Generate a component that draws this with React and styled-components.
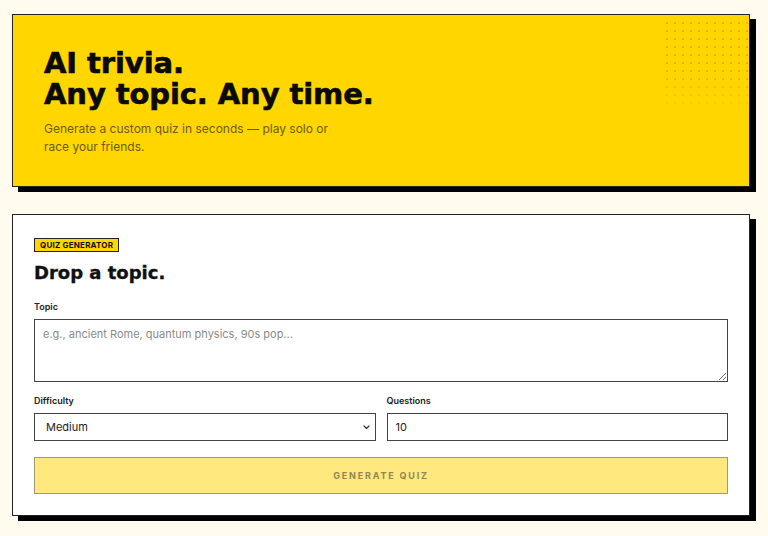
import React from "react";
import styled, { createGlobalStyle } from "styled-components";

const Global = createGlobalStyle`
  * { box-sizing: border-box; }
  html, body { margin: 0; padding: 0; background: #fffbef; }
  body { font-family: Inter, "Liberation Sans", sans-serif; color: #111; }
`;

const Page = styled.div`
  padding: 14px 18px 20px 12px;
  display: flex;
  flex-direction: column;
  gap: 27px;
`;

const Hero = styled.section`
  position: relative;
  overflow: hidden;
  background: #ffd600;
  border: 1px solid #222;
  box-shadow: 6px 5px 0 #000;
  padding: 33px 31px 30px;
  &::after {
    content: "";
    position: absolute;
    top: 2px;
    right: 0;
    width: 88px;
    height: 96px;
    background-image: radial-gradient(circle, rgba(150, 110, 0, 0.3) 0.8px, transparent 1.2px);
    background-size: 8px 8px;
    background-position: 2px 2px;
    -webkit-mask-image: linear-gradient(to bottom, #000 55%, transparent);
    mask-image: linear-gradient(to bottom, #000 55%, transparent);
  }
`;

const HeroTitle = styled.h1`
  margin: 0;
  font-family: "DejaVu Sans", "Liberation Sans", sans-serif;
  font-weight: 700;
  font-size: 29px;
  line-height: 31px;
  letter-spacing: -0.1px;
  color: #0a0a0a;
  -webkit-text-stroke: 0.6px #0a0a0a;
`;

const HeroText = styled.p`
  margin: 10px 0 0;
  max-width: 300px;
  font-size: 12px;
  line-height: 18px;
  color: #6e5b00;
`;

const Card = styled.section`
  background: #fff;
  border: 1px solid #222;
  box-shadow: 6px 5px 0 #000;
  padding: 23px 21px 21px;
  display: flex;
  flex-direction: column;
`;

const Badge = styled.span`
  align-self: flex-start;
  background: #ffd600;
  border: 1px solid #222;
  font-size: 8px;
  font-weight: 700;
  letter-spacing: 0.2px;
  line-height: 12px;
  padding: 0 5px;
  text-transform: uppercase;
`;

const CardTitle = styled.h2`
  margin: 9px 0 0;
  font-family: "DejaVu Sans", "Liberation Sans", sans-serif;
  font-weight: 700;
  font-size: 18px;
  line-height: 24px;
  -webkit-text-stroke: 0.35px #0a0a0a;
`;

const Field = styled.label`
  display: flex;
  flex-direction: column;
  gap: 7px;
  margin-top: ${(p) => p.$mt || 0}px;
  min-width: 0;
`;

const Label = styled.span`
  font-size: 9px;
  font-weight: 600;
  line-height: 11px;
  color: #222;
`;

const TextArea = styled.textarea`
  height: 63px;
  resize: vertical;
  border: 1px solid #444;
  border-radius: 0;
  padding: 7px 8px;
  font-family: Inter, "Liberation Sans", sans-serif;
  font-size: 11px;
  color: #222;
  &::placeholder { color: #8a8a8a; }
`;

const Row = styled.div`
  display: grid;
  grid-template-columns: 1fr 1fr;
  gap: 11px;
  margin-top: 13px;
`;

const SelectWrap = styled.div`
  position: relative;
  display: flex;
  flex-direction: column;
`;

const Select = styled.select`
  appearance: none;
  -webkit-appearance: none;
  height: 28px;
  border: 1px solid #444;
  border-radius: 0;
  background: #fff;
  padding: 0 20px 0 11px;
  font-family: Inter, "Liberation Sans", sans-serif;
  font-size: 11px;
  color: #222;
`;

const Chevron = styled.svg`
  position: absolute;
  right: 6px;
  top: 50%;
  width: 7px;
  height: 5px;
  margin-top: -2px;
  pointer-events: none;
`;

const Input = styled.input`
  height: 28px;
  border: 1px solid #444;
  border-radius: 0;
  padding: 0 8px;
  font-family: Inter, "Liberation Sans", sans-serif;
  font-size: 11px;
  color: #222;
`;

const Button = styled.button`
  margin-top: 16px;
  height: 37px;
  background: #ffe97f;
  border: 1px solid #a09a70;
  border-radius: 0;
  font-family: Inter, "Liberation Sans", sans-serif;
  font-size: 9px;
  font-weight: 700;
  letter-spacing: 1.8px;
  color: #8f8650;
  text-transform: uppercase;
  cursor: not-allowed;
`;

export default function App() {
  return (
    <>
      <Global />
      <Page>
        <Hero>
          <HeroTitle>
            AI trivia.
            <br />
            Any topic. Any time.
          </HeroTitle>
          <HeroText>
            Generate a custom quiz in seconds — play solo or race your friends.
          </HeroText>
        </Hero>
        <Card>
          <Badge>Quiz Generator</Badge>
          <CardTitle>Drop a topic.</CardTitle>
          <Field $mt={16}>
            <Label>Topic</Label>
            <TextArea placeholder="e.g., ancient Rome, quantum physics, 90s pop..." />
          </Field>
          <Row>
            <Field>
              <Label>Difficulty</Label>
              <SelectWrap>
                <Select defaultValue="Medium">
                  <option>Easy</option>
                  <option>Medium</option>
                  <option>Hard</option>
                </Select>
                <Chevron viewBox="0 0 7 5" fill="none">
                  <path d="M1 1l2.5 2.5L6 1" stroke="#333" strokeWidth="1.2" strokeLinecap="round" strokeLinejoin="round" />
                </Chevron>
              </SelectWrap>
            </Field>
            <Field>
              <Label>Questions</Label>
              <Input type="text" defaultValue="10" />
            </Field>
          </Row>
          <Button disabled>Generate Quiz</Button>
        </Card>
      </Page>
    </>
  );
}
